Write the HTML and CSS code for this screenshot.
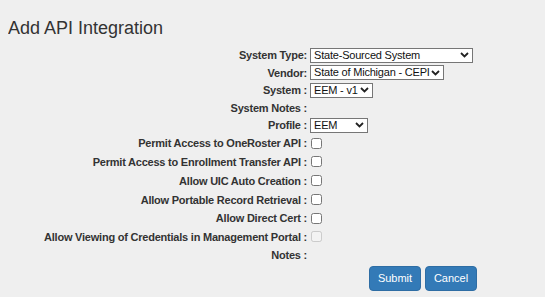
FILE: index.html
```html
<!DOCTYPE html>
<html>
<head>
    <title>Add API Integration</title>
    <link rel="stylesheet" href="styles.css">
</head>
<body>
    <h1 class="page-title">Add API Integration</h1>
    <form class="api-form" onsubmit="return false;">
        <label class="field-label" for="system-type">System Type:</label>
        <div class="field">
            <select id="system-type" class="select-type">
                <option>State-Sourced System</option>
            </select>
        </div>

        <label class="field-label" for="vendor">Vendor:</label>
        <div class="field">
            <select id="vendor" class="select-vendor">
                <option>State of Michigan - CEPI</option>
            </select>
        </div>

        <label class="field-label" for="system">System :</label>
        <div class="field">
            <select id="system" class="select-system">
                <option>EEM - v1</option>
            </select>
        </div>

        <span class="field-label">System Notes :</span>
        <div class="field"></div>

        <label class="field-label" for="profile">Profile :</label>
        <div class="field">
            <select id="profile" class="select-profile">
                <option>EEM</option>
            </select>
        </div>

        <label class="field-label" for="oneroster">Permit Access to OneRoster API :</label>
        <div class="field"><input type="checkbox" id="oneroster" /></div>

        <label class="field-label" for="enrollment">Permit Access to Enrollment Transfer API :</label>
        <div class="field"><input type="checkbox" id="enrollment" /></div>

        <label class="field-label" for="uic">Allow UIC Auto Creation :</label>
        <div class="field"><input type="checkbox" id="uic" /></div>

        <label class="field-label" for="portable">Allow Portable Record Retrieval :</label>
        <div class="field"><input type="checkbox" id="portable" /></div>

        <label class="field-label" for="direct-cert">Allow Direct Cert :</label>
        <div class="field"><input type="checkbox" id="direct-cert" /></div>

        <label class="field-label" for="credentials">Allow Viewing of Credentials in Management Portal :</label>
        <div class="field"><input type="checkbox" id="credentials" disabled /></div>

        <span class="field-label">Notes :</span>
        <div class="field"></div>

        <div class="form-actions">
            <button type="submit" class="btn">Submit</button>
            <button type="button" class="btn">Cancel</button>
        </div>
    </form>
</body>
</html>
```

FILE: styles.css
```css
body {
    font-family: Arial, "Liberation Sans", sans-serif;
    background-color: #efefef;
    color: #333;
    margin: 8px;
}
.page-title {
    font-size: 18px;
    font-weight: normal;
    margin: 10px 0 8px 0;
}
.api-form {
    display: grid;
    grid-template-columns: 299px 1fr;
    column-gap: 3px;
    row-gap: 1.5px;
    width: 469px;
    font-size: 11px;
    letter-spacing: -0.22px;
}
.field-label {
    font-weight: bold;
    text-align: right;
    display: flex;
    align-items: center;
    justify-content: flex-end;
    white-space: nowrap;
}
.field {
    display: flex;
    align-items: center;
    min-height: 16px;
}
select {
    appearance: none;
    -webkit-appearance: none;
    font-family: Arial, "Liberation Sans", sans-serif;
    font-size: 11px;
    letter-spacing: -0.2px;
    height: 15px;
    line-height: 13px;
    padding: 0 12px 0 3px;
    border: 1px solid #767676;
    border-radius: 0;
    background-color: white;
    background-image: url("data:image/svg+xml,%3Csvg xmlns='http://www.w3.org/2000/svg' width='9' height='6' viewBox='0 0 9 6'%3E%3Cpath d='M1 1l3.5 3.5L8 1' fill='none' stroke='%23222' stroke-width='1.8'/%3E%3C/svg%3E");
    background-repeat: no-repeat;
    background-position: right 3px center;
    color: #111;
    margin: 0;
}
.select-type { width: 163px; }
.select-vendor { width: 134px; }
.select-system { width: 63px; }
.select-profile { width: 58px; }
input[type="checkbox"] {
    width: 11px;
    height: 11px;
    margin: 3px 0 3.3px 1px;
}
.form-actions {
    grid-column: 1 / 3;
    display: flex;
    justify-content: flex-end;
    gap: 4px;
    margin-top: 1px;
}
.btn {
    font-family: Arial, "Liberation Sans", sans-serif;
    font-size: 11px;
    width: 52px;
    height: 25px;
    color: white;
    background-color: #337ab7;
    border: 1px solid #2e6da4;
    border-radius: 4px;
    padding: 0;
    cursor: pointer;
}
.btn:hover {
    background-color: #286090;
}
```
